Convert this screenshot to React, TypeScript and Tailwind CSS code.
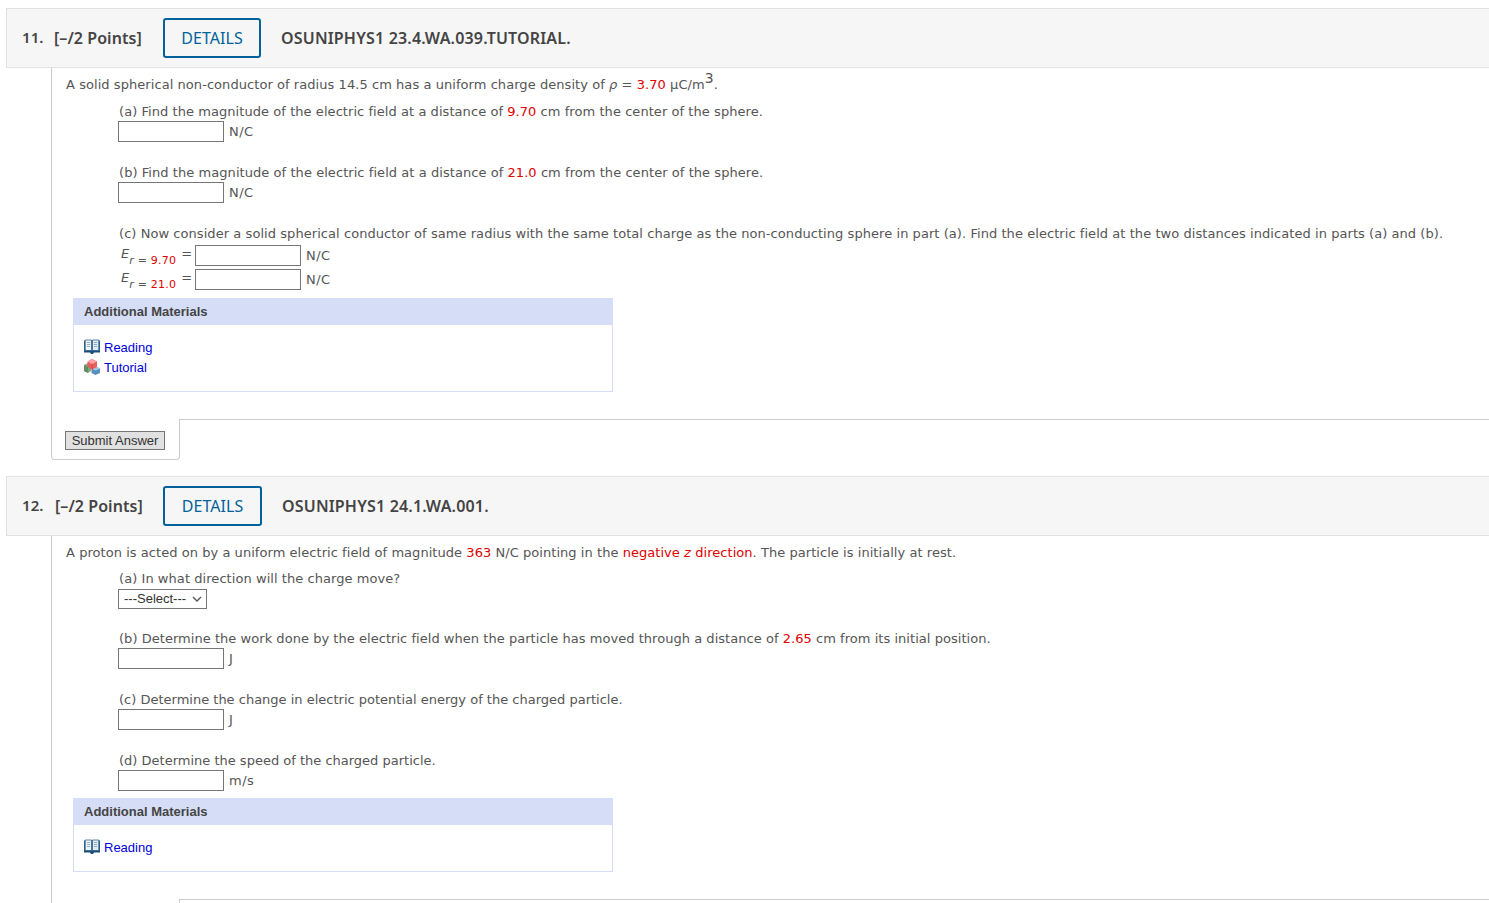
import type { ReactNode } from "react";

function Red({ children }: { children: ReactNode }) {
  return <span className="text-[#e00000]">{children}</span>;
}

function BookIcon() {
  return (
    <svg width="16" height="15" viewBox="0 0 16 15" className="shrink-0">
      <path d="M0 1.5 H16 V12.5 H0 Z" fill="#2a6a9a" />
      <path d="M1.2 1 H7.6 V11.5 H1.2 Z" fill="#f1f5f9" stroke="#1d4f7a" strokeWidth="0.7" />
      <path d="M14.8 1 H8.4 V11.5 H14.8 Z" fill="#e4edf5" stroke="#1d4f7a" strokeWidth="0.7" />
      <path d="M2.8 3.5 H6.2 M2.8 5.5 H6.2 M2.8 7.5 H6.2 M9.8 3.5 H13.2 M9.8 5.5 H13.2 M9.8 7.5 H13.2" stroke="#8aa4bc" strokeWidth="0.9" />
      <path d="M0 12 H16 V13.5 H10 L9 15 H7 L6 13.5 H0 Z" fill="#1d4f7a" />
    </svg>
  );
}

function CubesIcon() {
  return (
    <svg width="16" height="16" viewBox="0 0 16 16" className="shrink-0">
      <path d="M0 6 L4 4 L7 6 V12 L4 14 L0 12 Z" fill="#7fa87f" />
      <path d="M0 6 L4 8 V14 L0 12 Z" fill="#5f8f62" />
      <path d="M7.5 9.5 L11.5 7.5 L16 9.5 V14 L11.5 16 L7.5 14 Z" fill="#5b8fc0" />
      <path d="M7.5 9.5 L11.5 11.5 L16 9.5 L11.5 7.5 Z" fill="#a4c8e8" />
      <path d="M3.5 2.5 L8 0 L13 2.5 V8 L8 10.5 L3.5 8 Z" fill="#e85f5f" />
      <path d="M3.5 2.5 L8 5 L13 2.5 L8 0 Z" fill="#f7a3a3" />
      <path d="M8 5 V10.5" stroke="#c04444" strokeWidth="0.6" />
    </svg>
  );
}

function Header({ num, tag, numW, pointsW, btnW }: { num: string; tag: string; numW: string; pointsW: string; btnW: string }) {
  return (
    <div className="ml-[6px] flex h-[60px] items-center border border-r-0 border-[#e2e2e2] bg-[#f6f6f6] pl-[15px] font-['Noto_Sans',sans-serif] text-[#444444]">
      <span className={`-mt-[2px] ${numW} text-[15px] font-semibold`}>{num}</span>
      <span className={`${pointsW} -mt-[1px] text-[16px] font-semibold whitespace-nowrap`}>[–/2 Points]</span>
      <span className={`flex h-[40px] ${btnW} items-center justify-center rounded-[3px] border-2 border-[#00629b] text-[16px] text-[#00629b]`}>
        DETAILS
      </span>
      <span className="ml-[20px] text-[16px] font-semibold tracking-[0.18px]">{tag}</span>
    </div>
  );
}

function Field({ unit }: { unit: string }) {
  return (
    <div className="mt-[1px] flex h-[21px] items-center">
      <span className="h-[21px] w-[106px] border border-[#767676] bg-white" />
      <span className="ml-[5px] tracking-[0.5px]">{unit}</span>
    </div>
  );
}

function ErRow({ r, className = "" }: { r: string; className?: string }) {
  return (
    <div className={`flex h-[21px] items-center ${className}`}>
      <span className="flex w-[77px] items-start pl-[3px] leading-none">
        <i className="mt-[2px] text-[13px]">E</i>
        <span className="mt-[10px] text-[11px] tracking-[0.2px] whitespace-nowrap">
          <i>r</i> = <Red>{r}</Red>
        </span>
        <span className="mt-[2px] ml-[5px] text-[13px]">=</span>
      </span>
      <span className="h-[21px] w-[106px] border border-[#767676] bg-white" />
      <span className="ml-[5px] tracking-[0.5px]">N/C</span>
    </div>
  );
}

function Materials({ children, className = "" }: { children: ReactNode; className?: string }) {
  return (
    <div className={`ml-[6px] w-[540px] border border-[#d6def7] font-['Liberation_Sans',sans-serif] text-[13px] tracking-normal ${className}`}>
      <div className="-mx-px -mt-px flex h-[27px] items-center bg-[#d6def7] pl-[11px] font-bold text-[#444444]">Additional Materials</div>
      <div className="flex flex-col gap-[3px] pt-[13px] pl-[10px] text-[#0000dd]">{children}</div>
    </div>
  );
}

function MatLink({ label, icon }: { label: string; icon: ReactNode }) {
  return (
    <div className="flex h-[17px] items-center gap-[4px]">
      {icon}
      <span className="mt-[2px]">{label}</span>
    </div>
  );
}

function SubmitRow({ showButton = true }: { showButton?: boolean }) {
  return (
    <div className="flex h-[41px]">
      <div className="flex w-[129px] items-start rounded-b-[4px] border-x border-b border-[#cccccc] pt-[12px] pl-[13px]">
        {showButton && (
          <span className="flex h-[19px] w-[100px] items-center justify-center border border-[#767676] bg-[#e1e1e1] font-['Liberation_Sans',sans-serif] text-[13px] tracking-normal text-[#333333]">
            Submit Answer
          </span>
        )}
      </div>
      <div className="flex-1 border-t border-[#cccccc]" />
    </div>
  );
}

export default function App() {
  return (
    <div className="h-[903px] w-[1489px] overflow-hidden bg-white pt-[8px] font-['DejaVu_Sans',sans-serif] text-[13px] leading-[16px] tracking-[0.06px] text-[#555555]">
      <Header num="11." tag="OSUNIPHYS1 23.4.WA.039.TUTORIAL." numW="w-[32px]" pointsW="w-[109px]" btnW="w-[98px]" />
      <div className="ml-[51px]">
        <div className="h-[351px] border-l border-[#cccccc] pl-[15px]">
          <p className="-ml-px pt-[9px] whitespace-nowrap">
            A solid spherical non-conductor of radius 14.5 cm has a uniform charge density of <i>ρ</i> = <Red>3.70</Red> μC/m<sup className="-top-[0.42em] text-[14px]">3</sup>.
          </p>
          <div className="pl-[51px]">
            <p className="mt-[11px] pl-px whitespace-nowrap">
              (a) Find the magnitude of the electric field at a distance of <Red>9.70</Red> cm from the center of the sphere.
            </p>
            <Field unit="N/C" />
            <p className="mt-[23px] pl-px whitespace-nowrap">
              (b) Find the magnitude of the electric field at a distance of <Red>21.0</Red> cm from the center of the sphere.
            </p>
            <Field unit="N/C" />
            <p className="mt-[23px] pl-px whitespace-nowrap">
              (c) Now consider a solid spherical conductor of same radius with the same total charge as the non-conducting sphere in part (a). Find the electric field at the two distances indicated in parts (a) and (b).
            </p>
            <ErRow r="9.70" className="mt-[3px]" />
            <ErRow r="21.0" className="mt-[3px]" />
          </div>
          <Materials className="mt-[8px] h-[94px]">
            <MatLink label="Reading" icon={<BookIcon />} />
            <MatLink label="Tutorial" icon={<CubesIcon />} />
          </Materials>
        </div>
        <SubmitRow />
      </div>

      <div className="mt-[16px]">
        <Header num="12." tag="OSUNIPHYS1 24.1.WA.001." numW="w-[33px]" pointsW="w-[108px]" btnW="w-[99px]" />
      </div>
      <div className="ml-[51px]">
        <div className="h-[363px] border-l border-[#cccccc] pl-[15px]">
          <p className="-ml-px pt-[9px] tracking-[0.05px] whitespace-nowrap">
            A proton is acted on by a uniform electric field of magnitude <Red>363</Red> N/C pointing in the <Red>negative <i>z</i> direction</Red>. The particle is initially at rest.
          </p>
          <div className="pl-[51px]">
            <p className="mt-[10px] pl-px whitespace-nowrap">(a) In what direction will the charge move?</p>
            <div className="mt-[2px] flex h-[20px] w-[89px] items-center justify-between border border-[#767676] pr-[4px] pl-[5px] font-['Liberation_Sans',sans-serif] text-[13px] tracking-normal text-[#333333]">
              <span>---Select---</span>
              <svg width="10" height="6" viewBox="0 0 10 6"><path d="M1 1 L5 5 L9 1" fill="none" stroke="#555555" strokeWidth="1.4" /></svg>
            </div>
            <p className="mt-[22px] pl-px tracking-[0.04px] whitespace-nowrap">
              (b) Determine the work done by the electric field when the particle has moved through a distance of <Red>2.65</Red> cm from its initial position.
            </p>
            <Field unit="J" />
            <p className="mt-[23px] pl-px tracking-normal whitespace-nowrap">(c) Determine the change in electric potential energy of the charged particle.</p>
            <Field unit="J" />
            <p className="mt-[23px] pl-px tracking-normal whitespace-nowrap">(d) Determine the speed of the charged particle.</p>
            <Field unit="m/s" />
          </div>
          <Materials className="mt-[7px] h-[74px]">
            <MatLink label="Reading" icon={<BookIcon />} />
          </Materials>
        </div>
        <SubmitRow showButton={false} />
      </div>
    </div>
  );
}
